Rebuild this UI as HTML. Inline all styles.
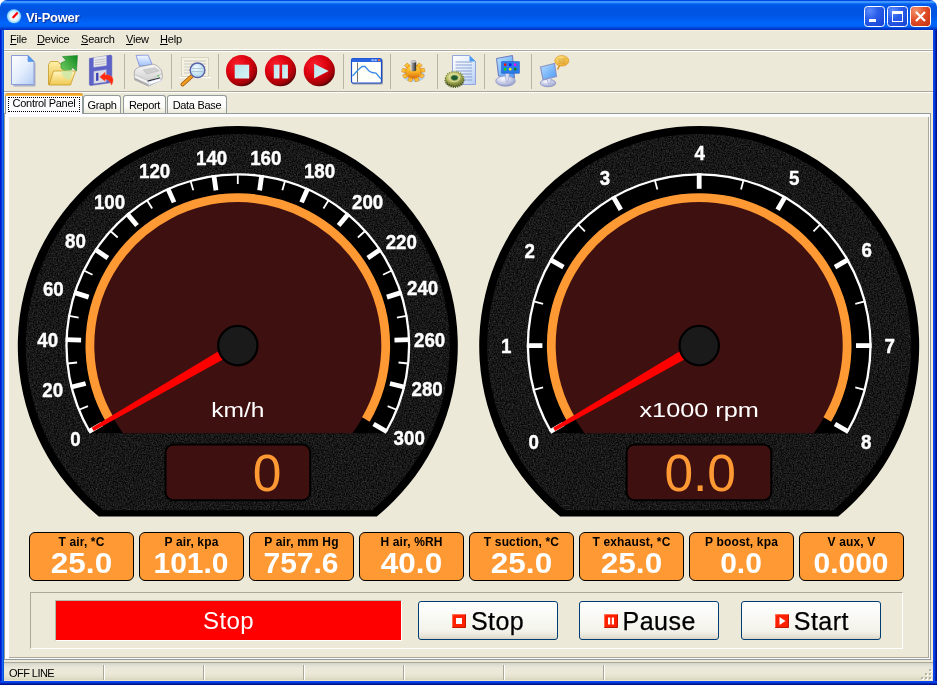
<!DOCTYPE html>
<html><head><meta charset="utf-8"><title>Vi-Power</title>
<style>
*{box-sizing:border-box;margin:0;padding:0}
html,body{width:937px;height:685px;overflow:hidden;background:#ece9d8;font-family:"Liberation Sans",Arial,sans-serif;font-size:11px;color:#000}
.abs,#win *{position:absolute}
#win{position:absolute;left:0;top:0;width:937px;height:685px;overflow:hidden;will-change:transform}
#title{left:0;top:0;width:937px;height:30px;border-radius:7px 7px 0 0;
 background:linear-gradient(180deg,#0047e2 0,#0047e2 1px,#3f97ff 1.2px,#3a92ff 2.6px,#0a6af5 3.6px,#0058e8 5px,#0054e2 9px,#0055e3 15px,#005cee 19px,#0065fd 23px,#0063fa 26px,#0050e0 27.5px,#0034c4 29px,#0031c6 30px)}
#title .t{left:26px;top:10px;color:#fff;font-weight:bold;font-size:13px;letter-spacing:-.25px;text-shadow:1px 1px 1px #0a2a8a;white-space:nowrap}
.wb{top:6px;width:21px;height:21px;border:1px solid #fff;border-radius:3.5px;background:radial-gradient(circle at 25% 20%,#5c8cfc 0,#2a5eea 40%,#1641d2 100%)}
.wb.close{background:radial-gradient(circle at 25% 20%,#f0946e 0,#e2502a 45%,#c4300e 100%)}
.bl{left:0;top:30px;width:4px;height:655px;background:linear-gradient(90deg,#0019cf 0,#0019cf 1px,#0831d9 1px,#0831d9 2px,#166aee 2px,#166aee 3px,#0855dd 3px,#0855dd 4px)}
.br{left:933px;top:30px;width:4px;height:655px;background:linear-gradient(90deg,#0b44ee 0,#0b44ee 1px,#0340df 1px,#0340df 2px,#0224b0 2px,#0224b0 3px,#00138c 3px,#00138c 4px)}
.bb{left:0;top:681px;width:937px;height:4px;background:linear-gradient(180deg,#0b44ee 0,#0b44ee 1px,#0340df 1px,#0340df 2px,#0224b0 2px,#0224b0 3px,#00138c 3px,#00138c 4px)}
#menu{left:4px;top:30px;width:929px;height:20px}
#menu span{top:3px;font-size:11px;white-space:nowrap;letter-spacing:-.2px}
#menu u{position:static;text-decoration:underline}
.hl{height:1px;left:4px;width:929px}
#tb{left:4px;top:52px;width:929px;height:39px}
.sep{top:3px;width:2px;height:33px;border-left:1px solid #aca899;border-right:1px solid #fff}
.ic{top:2px;width:36px;height:36px}
.tab{height:18px;top:95px;background:linear-gradient(180deg,#fff 0,#fcfcfa 60%,#ece9d8 100%);border:1px solid #919b9c;border-bottom:none;border-radius:3px 3px 0 0;font-size:11px;text-align:center;line-height:17px;white-space:nowrap;letter-spacing:-.3px}
.tab.act{top:93px;height:21px;background:#fcfcfe;border-top:none;z-index:3;line-height:16px}
.tab.act:before{content:"";position:absolute;left:-1px;right:-1px;top:0;height:3px;background:linear-gradient(180deg,#e68b2c 0,#ffc73c 100%);border-radius:3px 3px 0 0}
.tab.act i{left:2px;top:4px;right:2px;bottom:2px;border:1px dotted #000}
.tab span{left:0;width:100%;top:1px;text-align:center}
.tab.act span{top:2px}
#pane{left:4px;top:113px;width:927px;height:547px;background:#fcfcfe;border:1px solid #919b9c}
#page{left:9px;top:117px;width:920px;height:541px;background:#ece9d8;border-right:1px solid #aca899;border-bottom:1px solid #aca899}
#gsvg{left:0;top:0}
.sb{top:532px;width:105px;height:49px;background:#ff9933;border:1px solid #000;border-radius:6px}
.sb b{left:0;width:100%;top:3px;text-align:center;font-size:12px;font-weight:bold;line-height:12px;white-space:nowrap;letter-spacing:.15px}
.sb em{left:-.5px;width:100%;top:15.4px;text-align:center;font-style:normal;font-weight:bold;font-size:30px;line-height:30px;color:#fff;white-space:nowrap;transform-origin:51.5px 0}
.sb em.w{transform:scaleX(1.05)}
#grp{left:30px;top:592px;width:873px;height:57px;border:1px solid;border-color:#aca899 #fff #fff #aca899}
#red{left:55px;top:600px;width:347px;height:41px;background:#ff0000;color:#fff;font-size:24px;letter-spacing:.35px;text-align:center;line-height:40.6px;border:1px solid;border-color:#b4b8a6 #fff #fff #b4b8a6}
.btn{top:601px;width:140px;height:39px;border:1px solid #003c74;border-radius:3px;background:linear-gradient(180deg,#fff 0,#fafaf6 35%,#f3f2ea 80%,#e6e3d6 93%,#d8d4c6 100%)}
.btn s{text-decoration:none;top:12px;width:14px;height:14px;background:#ff2000;border-radius:1.5px;box-shadow:inset -1px -1px 0 #c01800,inset 1px 1px 0 #ff6a50}
.btn span{top:4.6px;font-size:25px;line-height:28px;white-space:nowrap;letter-spacing:.45px;-webkit-text-stroke:.25px #000}
#status{left:4px;top:662px;width:929px;height:19px;background:linear-gradient(180deg,#aca899 0,#aca899 1px,#d4d3ca 1px,#e0dfd4 3px,#eae8da 6px,#ece9d8 10px,#ebe8d6 12px,#e4e1cd 15px,#d8d5bf 18px,#efe6c8 18px,#efe6c8 19px)}
#status span{left:5px;top:5px;font-size:11px;letter-spacing:-.55px;white-space:nowrap}
#status i{top:3px;width:2px;height:15px;border-left:1px solid #aca899;border-right:1px solid #fff}
</style></head><body>
<div id="win">
 <div style="left:0;top:0;width:937px;height:10px;background:#fff"></div>
 <div id="title"><div class="t">Vi-Power</div>
  <svg style="left:6px;top:8px" width="16" height="16" viewBox="0 0 16 16"><defs><radialGradient id="gTi" cx=".5" cy=".5" r=".5"><stop offset="0" stop-color="#fff"/><stop offset=".6" stop-color="#e4f4ff"/><stop offset=".85" stop-color="#9adcff"/><stop offset="1" stop-color="#3a98f8"/></radialGradient></defs><circle cx="8" cy="8.300" r="7.300" fill="url(#gTi)"/><path d="M7.300 9.200L11 5.300" stroke="#f00" stroke-width="2.300" stroke-linecap="round"/></svg>
  <div class="wb" style="left:864px"><svg width="19" height="19"><rect x="4" y="12" width="7" height="3" fill="#fff"/></svg></div>
  <div class="wb" style="left:887px"><svg width="19" height="19"><rect x="4.5" y="5.5" width="10" height="9" fill="none" stroke="#fff"/><rect x="4" y="4" width="11" height="3" fill="#fff"/></svg></div>
  <div class="wb close" style="left:910px"><svg width="19" height="19"><path d="M5 5L14 14M14 5L5 14" stroke="#fff" stroke-width="2.2"/></svg></div>
 </div>
 <div style="left:932px;top:30px;width:1px;height:651px;background:#f2ead0"></div><div class="bl"></div><div class="br"></div><div class="bb"></div>
 <div id="menu">
  <span style="left:6px"><u>F</u>ile</span><span style="left:33px"><u>D</u>evice</span><span style="left:77px"><u>S</u>earch</span><span style="left:122px"><u>V</u>iew</span><span style="left:156px"><u>H</u>elp</span>
 </div>
 <div class="hl" style="top:49px;background:#fff"></div><div class="hl" style="top:30px;background:#f6f1dd"></div><div class="hl" style="top:50px;background:#aca899"></div><div class="hl" style="top:51px;background:#fff"></div>
 <div id="tb"></div>
<svg style="left:0;top:0" width="937" height="95" viewBox="0 0 937 95">
<defs>
 <linearGradient id="gPage" x1="0" y1="0" x2="1" y2="1"><stop offset="0" stop-color="#fff"/><stop offset=".5" stop-color="#e4eefc"/><stop offset="1" stop-color="#b4cdf4"/></linearGradient>
 <linearGradient id="gFold" x1="0" y1="0" x2="0" y2="1"><stop offset="0" stop-color="#fdf1a8"/><stop offset="1" stop-color="#e8b93c"/></linearGradient>
 <linearGradient id="gFold2" x1="0" y1="0" x2="0" y2="1"><stop offset="0" stop-color="#fff6c0"/><stop offset="1" stop-color="#f0c850"/></linearGradient>
 <linearGradient id="gGreen" x1="0" y1="1" x2="1" y2="0"><stop offset="0" stop-color="#7ed06a"/><stop offset="1" stop-color="#0e8a1e"/></linearGradient>
 <radialGradient id="gRed" cx=".36" cy=".3" r=".78"><stop offset="0" stop-color="#f8202c"/><stop offset=".5" stop-color="#dc000e"/><stop offset=".8" stop-color="#a40008"/><stop offset=".95" stop-color="#500004"/><stop offset="1" stop-color="#200001"/></radialGradient>
 <linearGradient id="gCy" x1="0" y1="0" x2="1" y2="1"><stop offset="0" stop-color="#b8e4ea"/><stop offset="1" stop-color="#d8f4f6"/></linearGradient>
 <linearGradient id="gGear" x1="0" y1="0" x2="0" y2="1"><stop offset="0" stop-color="#ffd84a"/><stop offset=".6" stop-color="#f5a820"/><stop offset="1" stop-color="#d86a10"/></linearGradient>
 <linearGradient id="gCyl" x1="0" y1="0" x2="1" y2="0"><stop offset="0" stop-color="#e8e8e8"/><stop offset=".4" stop-color="#8a8a8a"/><stop offset="1" stop-color="#2a2a2a"/></linearGradient>
 <linearGradient id="gPrn" x1="0" y1="0" x2="0" y2="1"><stop offset="0" stop-color="#f8f8f8"/><stop offset="1" stop-color="#c4c4c4"/></linearGradient>
 <radialGradient id="gLens" cx=".4" cy=".35" r=".7"><stop offset="0" stop-color="#f4fcff"/><stop offset="1" stop-color="#a8d4ec"/></radialGradient>
 <linearGradient id="gScr" x1="0" y1="0" x2="1" y2="1"><stop offset="0" stop-color="#b8e0ff"/><stop offset="1" stop-color="#4a98f4"/></linearGradient>
 <radialGradient id="gBase" cx=".4" cy=".3" r=".8"><stop offset="0" stop-color="#fff"/><stop offset="1" stop-color="#8a94c8"/></radialGradient>
 <radialGradient id="gOl" cx=".4" cy=".35" r=".7"><stop offset="0" stop-color="#f0f0b0"/><stop offset=".6" stop-color="#b4b860"/><stop offset="1" stop-color="#6a7430"/></radialGradient>
 <radialGradient id="gBub" cx=".4" cy=".3" r=".8"><stop offset="0" stop-color="#ffe88a"/><stop offset="1" stop-color="#e8a020"/></radialGradient>
</defs>
<!-- separators -->
<g stroke="#b9b6a6"><path d="M124.5 54V89M171.5 54V89M218.5 54V89M343.5 54V89M390.5 54V89M437.5 54V89M484.5 54V89M531.5 54V89"/></g>
<!-- new doc -->
<path d="M12.5 56.5H28.5L34.5 62.5V85.5H12.5Z" fill="#8890b8" transform="translate(1,1)" opacity=".6"/>
<path d="M11.5 55.5H28L34 61.5V84.5H11.5Z" fill="url(#gPage)" stroke="#8a9cdc" stroke-width="1"/>
<path d="M28 55.5V61.5H34Z" fill="#4a9cf4" stroke="#5a8ce0" stroke-width=".6"/>
<!-- open folder -->
<path d="M48.5 84.5V64.5L50.5 61.5H58L60 64H70.5V84.5Z" fill="url(#gFold)" stroke="#c89a28" stroke-width=".8"/>
<path d="M61 63L66 60.5L62.5 56.5L77.5 55.5L76.5 71L72.5 67.5L68.5 74L61 68Z" fill="url(#gGreen)" stroke="#0a7a1a" stroke-width=".5"/>
<path d="M49 85L53.5 71H75.5L70.5 85Z" fill="url(#gFold2)" stroke="#c89a28" stroke-width=".8"/>
<path d="M61 71L73 70L70 80C66 80 62 76 61 71Z" fill="#c8e8a8" opacity=".75"/>
<!-- save -->
<path d="M89.400 58.500L110.900 55.100L111.800 56V82.500L90.300 85.600L89.400 84.700Z" fill="#5d62c9" stroke="#474eb0" stroke-width=".5"/>
<path d="M93.700 57.600L106.400 55.800V65.500L93.700 67.200Z" fill="#e9e9ee" stroke="#c4c4d0" stroke-width=".4"/>
<path d="M95 60.300L105.300 58.900M95 62.600L105.300 61.200M95 64.900L105.300 63.500" stroke="#b4b4bc" stroke-width=".8"/>
<path d="M93.700 71.300L106.400 69.500V82L93.700 83.800Z" fill="#dcdce6" stroke="#8a8fd0" stroke-width=".4"/>
<path d="M96.100 73.100L98.400 72.800V80.500L96.100 80.900Z" fill="#3a40b0"/>
<path d="M99.700 76.900L105.100 72.200V74.900C110.500 74.300 113.600 77.500 113 81C112.800 82.800 112 84.300 111.200 85.200C111 82.500 109 79.500 105.100 79.300V81.300Z" fill="#ff2a10" stroke="#ff6a48" stroke-width=".4"/>
<!-- printer -->
<defs><linearGradient id="gPap" x1="0" y1="0" x2="0" y2="1"><stop offset="0" stop-color="#f4f8ff"/><stop offset="1" stop-color="#9cc0ff"/></linearGradient></defs>
<path d="M136 55.400L148.100 55.100L152.200 64.600L139.600 66.300Z" fill="url(#gPap)" stroke="#6a78d8" stroke-width=".7"/>
<path d="M134.200 73C134.200 69.500 137 67.500 140 66.800L152.500 64.300C156 64 162 69 162 72.600V78.900L148.600 86.100L134.700 79.800Z" fill="url(#gPrn)" stroke="#8c8c8c" stroke-width=".6"/>
<path d="M143.200 69.900L154.900 67.700L159.300 70.800L146.800 74Z" fill="#cfcfcf" stroke="#a8a8a8" stroke-width=".4"/>
<path d="M134.400 74.500L148.600 81L162 73.800V78.900L148.600 86.100L134.700 79.800Z" fill="#f1f1f1" stroke="#9a9a9a" stroke-width=".4"/>
<path d="M134.700 77.800L148.600 84.200V86.100L134.700 79.800Z" fill="#a8a8a8"/>
<path d="M147.700 80.600L160.200 77.200V78.500L147.700 81.900Z" fill="#2a2a2a"/>
<path d="M147.900 81.800L160.200 78.500L161.100 80.700L150 84.700Z" fill="#fff" stroke="#8a9ce0" stroke-width=".4"/>
<rect x="157.500" y="75" width="1.600" height="1.600" fill="#4ac84a"/>
<!-- zoom -->
<rect x="181.500" y="57.500" width="27" height="19" fill="#f6f2e2" stroke="#d0ccb8" stroke-width=".8"/>
<path d="M184 61H206M184 64H206M184 67H206M184 70H206M184 73H206" stroke="#c8c8c0" stroke-width="1"/>
<path d="M179 77.500H211" stroke="#fff" stroke-width="1"/>
<path d="M192 76L182.500 84.500" stroke="#a05a10" stroke-width="4" stroke-linecap="round"/>
<path d="M192 76L182.500 84.500" stroke="#f09a20" stroke-width="2.400" stroke-linecap="round"/>
<circle cx="197.500" cy="70.300" r="7.300" fill="url(#gLens)" stroke="#5a62a8" stroke-width="1.500"/>
<path d="M192 68.500H203M192 71.500H203" stroke="#a8c4d8" stroke-width=".9"/>
<!-- stop / pause / play -->
<circle cx="241.600" cy="70.700" r="15.600" fill="url(#gRed)"/>
<circle cx="280.500" cy="70.700" r="15.600" fill="url(#gRed)"/>
<circle cx="319.300" cy="70.700" r="15.600" fill="url(#gRed)"/>
<rect x="234.700" y="64.700" width="14.500" height="13.800" fill="url(#gCy)"/>
<rect x="273.800" y="64.700" width="5.700" height="13.800" fill="url(#gCy)"/><rect x="282.100" y="64.700" width="5.800" height="13.800" fill="url(#gCy)"/>
<path d="M314.100 63.800L328.600 71L314.100 78.400Z" fill="url(#gCy)"/>
<!-- graph window -->
<rect x="352" y="59" width="31" height="25.500" rx="1.500" fill="#5a6488" opacity=".6"/>
<rect x="351.500" y="58.500" width="30" height="24.500" rx="1.500" fill="#fffffa" stroke="#1a4cc8" stroke-width="1.200"/>
<path d="M351.500 60a1.500 1.500 0 0 1 1.500-1.500h27a1.500 1.500 0 0 1 1.500 1.500v2h-30Z" fill="#2a64e0"/>
<rect x="378" y="59.300" width="2.200" height="1.800" fill="#f07040"/><rect x="374.500" y="59.300" width="2.200" height="1.800" fill="#a8c4ff"/><rect x="371.500" y="59.300" width="2.200" height="1.800" fill="#a8c4ff"/>
<path d="M357.500 62.500V82" stroke="#707070" stroke-width="1"/>
<path d="M352.500 76L358 70L362 66.500H365L369 71L372 72.500L376 73L381 79" fill="none" stroke="#3a8ce8" stroke-width="1.300"/>
<!-- gear with cylinder -->
<ellipse cx="414" cy="76" rx="11" ry="6" fill="#a8d0f8" opacity=".8"/>
<g transform="translate(413.400,71.800) scale(1,.87)">
 <g fill="url(#gGear)" stroke="#c86a10" stroke-width=".5">
  <circle r="7.400"/>
  <g id="teeth"><rect x="-2.200" y="-11.500" width="4.200" height="6" rx=".6"/><rect x="-2.200" y="-11.500" width="4.200" height="6" rx=".6" transform="rotate(40)"/><rect x="-2.200" y="-11.500" width="4.200" height="6" rx=".6" transform="rotate(80)"/><rect x="-2.200" y="-11.500" width="4.200" height="6" rx=".6" transform="rotate(120)"/><rect x="-2.200" y="-11.500" width="4.200" height="6" rx=".6" transform="rotate(160)"/><rect x="-2.200" y="-11.500" width="4.200" height="6" rx=".6" transform="rotate(200)"/><rect x="-2.200" y="-11.500" width="4.200" height="6" rx=".6" transform="rotate(240)"/><rect x="-2.200" y="-11.500" width="4.200" height="6" rx=".6" transform="rotate(280)"/><rect x="-2.200" y="-11.500" width="4.200" height="6" rx=".6" transform="rotate(320)"/></g>
 </g>
 <circle r="7.200" fill="url(#gGear)"/>
</g>
<path d="M410.400 61.500a2.900 1.300 0 0 1 5.800 0V70a2.900 1.300 0 0 1-5.800 0Z" fill="url(#gCyl)"/>
<ellipse cx="413.300" cy="61.500" rx="2.900" ry="1.300" fill="#c8c8c8"/>
<!-- doc + gear -->
<path d="M452.500 55.500H469.500L475.500 61.500V84.500H452.500Z" fill="url(#gPage)" stroke="#8a9cdc" stroke-width=".9"/>
<path d="M469.500 55.500V61.500H475.500Z" fill="#4a9cf4"/>
<path d="M455.500 62H472M455.500 65H472M455.500 68H472M455.500 71H472M455.500 74H472M462 77H472M464 80H472" stroke="#8aa0d0" stroke-width="1"/>
<ellipse cx="454.500" cy="80.300" rx="9.200" ry="6.800" fill="#5a6428" stroke="#4a5420" stroke-width="1.6" stroke-dasharray="1.1 1.1"/>
<ellipse cx="454.500" cy="78.300" rx="8.800" ry="6.600" fill="url(#gOl)" stroke="#8a9440" stroke-width="1.8" stroke-dasharray="1.1 1.1"/>
<ellipse cx="454.500" cy="77.800" rx="5.300" ry="3.900" fill="#c8cc80" stroke="#e8e8b0" stroke-width=".6"/>
<ellipse cx="454.500" cy="77.800" rx="3.300" ry="2.400" fill="#1e5a30" stroke="#4a7a40" stroke-width=".7"/>
<!-- monitor w/ colors -->
<path d="M496.500 58.500L512.500 55.500L514.500 78L498.500 76Z" fill="url(#gScr)" stroke="#6a78c0" stroke-width="1"/>
<ellipse cx="505.500" cy="81" rx="9.800" ry="5.200" fill="url(#gBase)" stroke="#7a84c0" stroke-width=".6"/>
<path d="M505 72L509.500 72.500L508 82L506 81.500Z" fill="#d8dcf0" stroke="#8a94c8" stroke-width=".5"/>
<rect x="501.700" y="61.700" width="17.600" height="11.500" fill="#2a7ae8" stroke="#1a58c8" stroke-width=".6"/>
<rect x="504" y="63.500" width="2.400" height="2.400" fill="#f01010"/><rect x="509" y="63.500" width="2.400" height="2.400" fill="#1010f0"/><rect x="514" y="63.500" width="2.400" height="2.400" fill="#f010f0"/>
<rect x="504" y="68" width="2.400" height="2.400" fill="#10e010"/><rect x="509" y="68" width="2.400" height="2.400" fill="#f0f010"/><rect x="514" y="68" width="2.400" height="2.400" fill="#108010"/>
<!-- monitor + chat -->
<ellipse cx="548" cy="83" rx="7.800" ry="3.800" fill="url(#gBase)" stroke="#7a84c0" stroke-width=".6"/>
<path d="M546.500 77L551.500 76.500L550.500 83.500L548 83.500Z" fill="#d8dcf0" stroke="#8a94c8" stroke-width=".5"/>
<path d="M540.500 67L554.500 63.500L556.500 76.500L543 79.500Z" fill="url(#gScr)" stroke="#8a94c8" stroke-width="1.200"/>
<path d="M557.500 69.500L560 64.800" stroke="#d89020" stroke-width="1.500"/>
<ellipse cx="561.800" cy="60.800" rx="7" ry="5.300" fill="url(#gBub)" stroke="#d89020" stroke-width=".6"/>
<path d="M558 59H565.500M558 61H565.500M558.500 63H565" stroke="#c88a18" stroke-width=".7"/>
</svg>

 <div class="hl" style="top:91px;background:#aca899"></div><div class="hl" style="top:92px;background:#fff"></div>
 <div id="pane"></div>
 <div class="tab act" style="left:5px;width:78px"><span>Control Panel</span><i></i></div>
 <div class="tab" style="left:83px;width:38px"><span>Graph</span></div>
 <div class="tab" style="left:123px;width:43px"><span>Report</span></div>
 <div class="tab" style="left:167px;width:60px"><span>Data Base</span></div>
 <div id="page"></div>
 <svg id="gsvg" width="937" height="685" viewBox="0 0 937 685">
  <defs><filter id="noise" x="0" y="0" width="100%" height="100%" color-interpolation-filters="sRGB">
   <feTurbulence type="fractalNoise" baseFrequency="0.75" numOctaves="2" seed="3" result="n"/>
   <feColorMatrix in="n" type="matrix" values="0.34 0 0 0 -0.076  0.34 0 0 0 -0.076  0.34 0 0 0 -0.076  0 0 0 0 1" result="g"/>
   <feComposite in="g" in2="SourceGraphic" operator="in"/>
  </filter></defs>
<path d="M98.77 516.40A220.0 220.0 0 1 1 376.83 516.40Z" fill="#000"/>
<path d="M103.95 510.30A212.0 212.0 0 1 1 371.65 510.30Z" fill="#222" filter="url(#noise)"/>
<path d="M90.59 433.20A171.3 171.3 0 1 1 385.01 433.20Z" fill="#000"/>
<path d="M123.26 433.20A144.2 144.2 0 1 1 352.34 433.20Z" fill="#3f1010"/>
<path d="M109.71 419.55A147.9 147.9 0 1 1 365.89 419.55" fill="none" stroke="#ff9933" stroke-width="8.8"/>
<path d="M89.45 431.25A171.3 171.3 0 1 1 386.15 431.25" fill="none" stroke="#fff" stroke-width="2.3"/>
<g stroke="#fff"><line x1="88.58" y1="431.75" x2="102.01" y2="424.00" stroke-width="4.8"/><line x1="78.97" y1="409.77" x2="87.97" y2="406.14" stroke-width="1.8"/><line x1="70.62" y1="387.28" x2="85.66" y2="383.53" stroke-width="4.8"/><line x1="67.44" y1="363.51" x2="77.09" y2="362.49" stroke-width="1.8"/><line x1="65.60" y1="339.59" x2="81.10" y2="340.13" stroke-width="4.8"/><line x1="69.10" y1="315.85" x2="78.66" y2="317.54" stroke-width="1.8"/><line x1="73.93" y1="292.36" x2="88.67" y2="297.15" stroke-width="4.8"/><line x1="83.84" y1="270.51" x2="92.55" y2="274.76" stroke-width="1.8"/><line x1="94.96" y1="249.25" x2="107.81" y2="257.92" stroke-width="4.8"/><line x1="110.50" y1="230.98" x2="117.71" y2="237.47" stroke-width="1.8"/><line x1="127.05" y1="213.61" x2="137.01" y2="225.48" stroke-width="4.8"/><line x1="147.02" y1="200.33" x2="152.17" y2="208.56" stroke-width="1.8"/><line x1="167.72" y1="188.20" x2="174.02" y2="202.36" stroke-width="4.8"/><line x1="190.58" y1="180.94" x2="193.26" y2="190.26" stroke-width="1.8"/><line x1="213.82" y1="174.98" x2="215.98" y2="190.33" stroke-width="4.8"/><line x1="237.80" y1="174.30" x2="237.80" y2="184.00" stroke-width="1.8"/><line x1="261.78" y1="174.98" x2="259.62" y2="190.33" stroke-width="4.8"/><line x1="285.02" y1="180.94" x2="282.34" y2="190.26" stroke-width="1.8"/><line x1="307.88" y1="188.20" x2="301.58" y2="202.36" stroke-width="4.8"/><line x1="328.58" y1="200.33" x2="323.43" y2="208.56" stroke-width="1.8"/><line x1="348.55" y1="213.61" x2="338.59" y2="225.48" stroke-width="4.8"/><line x1="365.10" y1="230.98" x2="357.89" y2="237.47" stroke-width="1.8"/><line x1="380.64" y1="249.25" x2="367.79" y2="257.92" stroke-width="4.8"/><line x1="391.76" y1="270.51" x2="383.05" y2="274.76" stroke-width="1.8"/><line x1="401.67" y1="292.36" x2="386.93" y2="297.15" stroke-width="4.8"/><line x1="406.50" y1="315.85" x2="396.94" y2="317.54" stroke-width="1.8"/><line x1="410.00" y1="339.59" x2="394.50" y2="340.13" stroke-width="4.8"/><line x1="408.16" y1="363.51" x2="398.51" y2="362.49" stroke-width="1.8"/><line x1="404.98" y1="387.28" x2="389.94" y2="383.53" stroke-width="4.8"/><line x1="396.63" y1="409.77" x2="387.63" y2="406.14" stroke-width="1.8"/><line x1="387.02" y1="431.75" x2="373.59" y2="424.00" stroke-width="4.8"/></g>
<g fill="#fff" font-family="'Liberation Sans',Arial,sans-serif" font-weight="bold" font-size="19.4" text-anchor="middle" stroke="#fff" stroke-width=".4"><text transform="translate(75.4 445.7) scale(.965 1)">0</text><text transform="translate(52.7 397.4) scale(.965 1)">20</text><text transform="translate(47.7 347.2) scale(.965 1)">40</text><text transform="translate(53.3 295.5) scale(.965 1)">60</text><text transform="translate(75.4 248.4) scale(.965 1)">80</text><text transform="translate(109.5 209.0) scale(.965 1)">100</text><text transform="translate(154.6 178.4) scale(.965 1)">120</text><text transform="translate(211.6 164.5) scale(.965 1)">140</text><text transform="translate(265.8 164.5) scale(.965 1)">160</text><text transform="translate(319.5 178.4) scale(.965 1)">180</text><text transform="translate(367.6 209.0) scale(.965 1)">200</text><text transform="translate(401.3 248.5) scale(.965 1)">220</text><text transform="translate(422.6 295.2) scale(.965 1)">240</text><text transform="translate(429.6 347.4) scale(.965 1)">260</text><text transform="translate(427.1 396.3) scale(.965 1)">280</text><text transform="translate(409.2 444.9) scale(.965 1)">300</text></g>
<text x="237.8" y="416.6" fill="#fff" font-family="'Liberation Sans',Arial,sans-serif" font-size="19.6" text-anchor="middle" textLength="53.2" lengthAdjust="spacingAndGlyphs">km/h</text>
<polygon points="226.69,346.36 91.79,427.70 93.69,431.00 231.59,354.84" fill="#ff0000"/>
<circle cx="237.8" cy="345.6" r="19.7" fill="#1a1a1a" stroke="#000" stroke-width="2.2"/>
<rect x="165.5" y="444.4" width="144.7" height="55.9" rx="8" fill="#3f1010" stroke="#000" stroke-width="2"/>
<text x="281.4" y="491.3" fill="#ff9933" font-family="'Liberation Sans',Arial,sans-serif" font-size="51.5" text-anchor="end">0</text>
<path d="M560.17 516.40A220.0 220.0 0 1 1 838.23 516.40Z" fill="#000"/>
<path d="M565.35 510.30A212.0 212.0 0 1 1 833.05 510.30Z" fill="#222" filter="url(#noise)"/>
<path d="M551.99 433.20A171.3 171.3 0 1 1 846.41 433.20Z" fill="#000"/>
<path d="M584.66 433.20A144.2 144.2 0 1 1 813.74 433.20Z" fill="#3f1010"/>
<path d="M571.11 419.55A147.9 147.9 0 1 1 827.29 419.55" fill="none" stroke="#ff9933" stroke-width="8.8"/>
<path d="M550.85 431.25A171.3 171.3 0 1 1 847.55 431.25" fill="none" stroke="#fff" stroke-width="2.3"/>
<g stroke="#fff"><line x1="549.98" y1="431.75" x2="563.41" y2="424.00" stroke-width="4.8"/><line x1="533.74" y1="389.94" x2="543.11" y2="387.43" stroke-width="1.8"/><line x1="526.90" y1="345.60" x2="542.40" y2="345.60" stroke-width="4.8"/><line x1="533.74" y1="301.26" x2="543.11" y2="303.77" stroke-width="1.8"/><line x1="549.98" y1="259.45" x2="563.41" y2="267.20" stroke-width="4.8"/><line x1="578.07" y1="224.47" x2="584.93" y2="231.33" stroke-width="1.8"/><line x1="613.05" y1="196.38" x2="620.80" y2="209.81" stroke-width="4.8"/><line x1="654.86" y1="180.14" x2="657.37" y2="189.51" stroke-width="1.8"/><line x1="699.20" y1="173.30" x2="699.20" y2="188.80" stroke-width="4.8"/><line x1="743.54" y1="180.14" x2="741.03" y2="189.51" stroke-width="1.8"/><line x1="785.35" y1="196.38" x2="777.60" y2="209.81" stroke-width="4.8"/><line x1="820.33" y1="224.47" x2="813.47" y2="231.33" stroke-width="1.8"/><line x1="848.42" y1="259.45" x2="834.99" y2="267.20" stroke-width="4.8"/><line x1="864.66" y1="301.26" x2="855.29" y2="303.77" stroke-width="1.8"/><line x1="871.50" y1="345.60" x2="856.00" y2="345.60" stroke-width="4.8"/><line x1="864.66" y1="389.94" x2="855.29" y2="387.43" stroke-width="1.8"/><line x1="848.42" y1="431.75" x2="834.99" y2="424.00" stroke-width="4.8"/></g>
<g fill="#fff" font-family="'Liberation Sans',Arial,sans-serif" font-weight="bold" font-size="19.4" text-anchor="middle" stroke="#fff" stroke-width=".4"><text transform="translate(533.6 449.2) scale(.965 1)">0</text><text transform="translate(506.3 353.2) scale(.965 1)">1</text><text transform="translate(529.7 257.5) scale(.965 1)">2</text><text transform="translate(604.9 185.2) scale(.965 1)">3</text><text transform="translate(699.8 159.7) scale(.965 1)">4</text><text transform="translate(794.3 184.5) scale(.965 1)">5</text><text transform="translate(866.7 256.9) scale(.965 1)">6</text><text transform="translate(889.8 352.9) scale(.965 1)">7</text><text transform="translate(866.2 449.2) scale(.965 1)">8</text></g>
<text x="699.2" y="416.6" fill="#fff" font-family="'Liberation Sans',Arial,sans-serif" font-size="19.6" text-anchor="middle" textLength="119.5" lengthAdjust="spacingAndGlyphs">x1000 rpm</text>
<polygon points="688.09,346.36 553.19,427.70 555.09,431.00 692.99,354.84" fill="#ff0000"/>
<circle cx="699.2" cy="345.6" r="19.7" fill="#1a1a1a" stroke="#000" stroke-width="2.2"/>
<rect x="626.6" y="444.4" width="144.7" height="55.9" rx="8" fill="#3f1010" stroke="#000" stroke-width="2"/>
<text x="700.2" y="491.3" fill="#ff9933" font-family="'Liberation Sans',Arial,sans-serif" font-size="51.5" text-anchor="middle">0.0</text>
 </svg>
 <div class="sb" style="left:29px"><b>T air, *C</b><em class="w">25.0</em></div>
 <div class="sb" style="left:139px"><b>P air, kpa</b><em>101.0</em></div>
 <div class="sb" style="left:249px"><b>P air, mm Hg</b><em>757.6</em></div>
 <div class="sb" style="left:359px"><b>H air, %RH</b><em class="w">40.0</em></div>
 <div class="sb" style="left:469px"><b>T suction, *C</b><em class="w">25.0</em></div>
 <div class="sb" style="left:579px"><b>T exhaust, *C</b><em class="w">25.0</em></div>
 <div class="sb" style="left:689px"><b>P boost, kpa</b><em>0.0</em></div>
 <div class="sb" style="left:799px"><b>V aux, V</b><em>0.000</em></div>
 <div id="grp"></div>
 <div id="red">Stop</div>
 <div class="btn" style="left:418px"><s style="left:33px"><svg width="14" height="14"><rect x="4" y="4" width="6" height="6" fill="#fff"/></svg></s><span style="left:52px">Stop</span></div>
 <div class="btn" style="left:579px"><s style="left:24px"><svg width="14" height="14"><rect x="4" y="3.5" width="2.2" height="7" fill="#fff"/><rect x="7.8" y="3.5" width="2.2" height="7" fill="#fff"/></svg></s><span style="left:42.6px">Pause</span></div>
 <div class="btn" style="left:741px"><s style="left:33px"><svg width="14" height="14"><path d="M4.5 3L10.5 7L4.5 11Z" fill="#fff"/></svg></s><span style="left:51.8px">Start</span></div>
 <div id="status"><span>OFF LINE</span><i style="left:99px"></i><i style="left:199px"></i><i style="left:299px"></i><i style="left:399px"></i><i style="left:499px"></i><i style="left:599px"></i>
  <svg style="left:916px;top:6px" width="13" height="13"><g fill="#fff"><rect x="10" y="10" width="2" height="2"/><rect x="6" y="10" width="2" height="2"/><rect x="2" y="10" width="2" height="2"/><rect x="10" y="6" width="2" height="2"/><rect x="6" y="6" width="2" height="2"/><rect x="10" y="2" width="2" height="2"/></g><g fill="#b8b4a2"><rect x="9" y="9" width="2" height="2"/><rect x="5" y="9" width="2" height="2"/><rect x="1" y="9" width="2" height="2"/><rect x="9" y="5" width="2" height="2"/><rect x="5" y="5" width="2" height="2"/><rect x="9" y="1" width="2" height="2"/></g></svg>
 </div>
</div>
</body></html>
